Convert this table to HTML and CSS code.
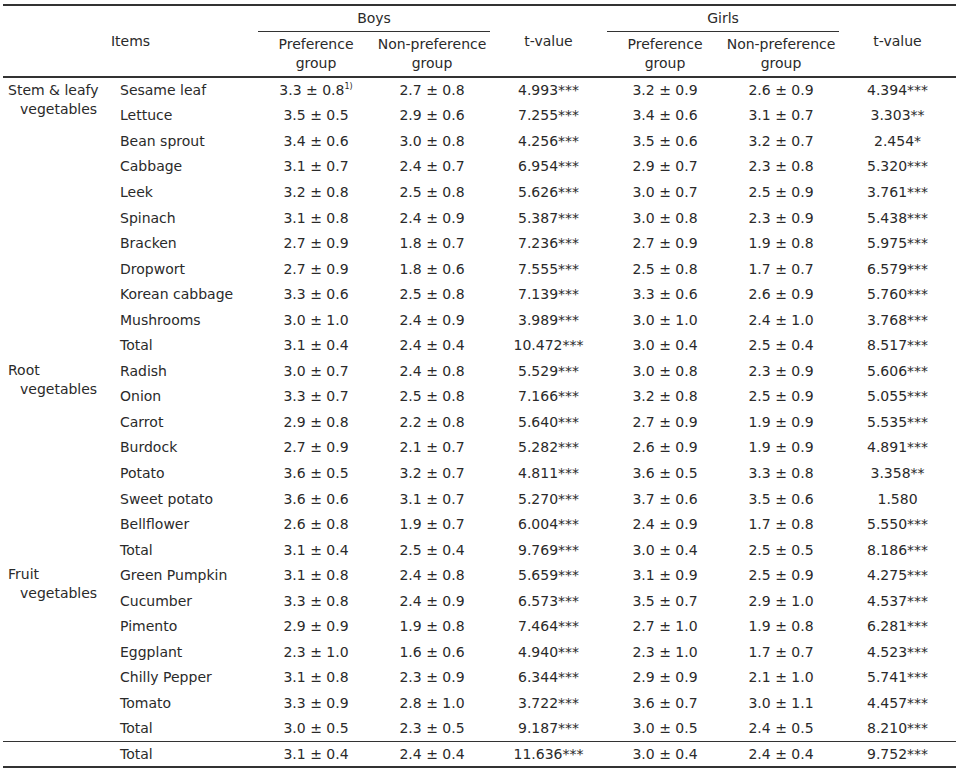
FILE: index.html
```html
<!DOCTYPE html>
<html>
<head>
<meta charset="utf-8">
<link rel="stylesheet" href="styles.css">
</head>
<body>
<table class="tbl">
  <colgroup>
    <col class="c-cat"><col class="c-item"><col class="c-n"><col class="c-n"><col class="c-t"><col class="c-n"><col class="c-n"><col class="c-t">
  </colgroup>
  <thead>
    <tr class="h1">
      <th colspan="2" rowspan="2" class="items-h">Items</th>
      <th colspan="2" class="grp">Boys</th>
      <th rowspan="2">t-value</th>
      <th colspan="2" class="grp">Girls</th>
      <th rowspan="2">t-value</th>
    </tr>
    <tr class="h2">
      <th>Preference<br>group</th>
      <th>Non-preference<br>group</th>
      <th>Preference<br>group</th>
      <th>Non-preference<br>group</th>
    </tr>
  </thead>
  <tbody>
    <tr><td rowspan="11" class="cat"><div class="catlbl">Stem &amp; leafy vegetables</div></td><td class="item">Sesame leaf</td><td>3.3 ± 0.8<sup>1)</sup></td><td>2.7 ± 0.8</td><td>4.993***</td><td>3.2 ± 0.9</td><td>2.6 ± 0.9</td><td>4.394***</td></tr>
    <tr><td class="item">Lettuce</td><td>3.5 ± 0.5</td><td>2.9 ± 0.6</td><td>7.255***</td><td>3.4 ± 0.6</td><td>3.1 ± 0.7</td><td>3.303**</td></tr>
    <tr><td class="item">Bean sprout</td><td>3.4 ± 0.6</td><td>3.0 ± 0.8</td><td>4.256***</td><td>3.5 ± 0.6</td><td>3.2 ± 0.7</td><td>2.454*</td></tr>
    <tr><td class="item">Cabbage</td><td>3.1 ± 0.7</td><td>2.4 ± 0.7</td><td>6.954***</td><td>2.9 ± 0.7</td><td>2.3 ± 0.8</td><td>5.320***</td></tr>
    <tr><td class="item">Leek</td><td>3.2 ± 0.8</td><td>2.5 ± 0.8</td><td>5.626***</td><td>3.0 ± 0.7</td><td>2.5 ± 0.9</td><td>3.761***</td></tr>
    <tr><td class="item">Spinach</td><td>3.1 ± 0.8</td><td>2.4 ± 0.9</td><td>5.387***</td><td>3.0 ± 0.8</td><td>2.3 ± 0.9</td><td>5.438***</td></tr>
    <tr><td class="item">Bracken</td><td>2.7 ± 0.9</td><td>1.8 ± 0.7</td><td>7.236***</td><td>2.7 ± 0.9</td><td>1.9 ± 0.8</td><td>5.975***</td></tr>
    <tr><td class="item">Dropwort</td><td>2.7 ± 0.9</td><td>1.8 ± 0.6</td><td>7.555***</td><td>2.5 ± 0.8</td><td>1.7 ± 0.7</td><td>6.579***</td></tr>
    <tr><td class="item">Korean cabbage</td><td>3.3 ± 0.6</td><td>2.5 ± 0.8</td><td>7.139***</td><td>3.3 ± 0.6</td><td>2.6 ± 0.9</td><td>5.760***</td></tr>
    <tr><td class="item">Mushrooms</td><td>3.0 ± 1.0</td><td>2.4 ± 0.9</td><td>3.989***</td><td>3.0 ± 1.0</td><td>2.4 ± 1.0</td><td>3.768***</td></tr>
    <tr><td class="item">Total</td><td>3.1 ± 0.4</td><td>2.4 ± 0.4</td><td>10.472***</td><td>3.0 ± 0.4</td><td>2.5 ± 0.4</td><td>8.517***</td></tr>

    <tr><td rowspan="8" class="cat"><div class="catlbl">Root vegetables</div></td><td class="item">Radish</td><td>3.0 ± 0.7</td><td>2.4 ± 0.8</td><td>5.529***</td><td>3.0 ± 0.8</td><td>2.3 ± 0.9</td><td>5.606***</td></tr>
    <tr><td class="item">Onion</td><td>3.3 ± 0.7</td><td>2.5 ± 0.8</td><td>7.166***</td><td>3.2 ± 0.8</td><td>2.5 ± 0.9</td><td>5.055***</td></tr>
    <tr><td class="item">Carrot</td><td>2.9 ± 0.8</td><td>2.2 ± 0.8</td><td>5.640***</td><td>2.7 ± 0.9</td><td>1.9 ± 0.9</td><td>5.535***</td></tr>
    <tr><td class="item">Burdock</td><td>2.7 ± 0.9</td><td>2.1 ± 0.7</td><td>5.282***</td><td>2.6 ± 0.9</td><td>1.9 ± 0.9</td><td>4.891***</td></tr>
    <tr><td class="item">Potato</td><td>3.6 ± 0.5</td><td>3.2 ± 0.7</td><td>4.811***</td><td>3.6 ± 0.5</td><td>3.3 ± 0.8</td><td>3.358**</td></tr>
    <tr><td class="item">Sweet potato</td><td>3.6 ± 0.6</td><td>3.1 ± 0.7</td><td>5.270***</td><td>3.7 ± 0.6</td><td>3.5 ± 0.6</td><td>1.580</td></tr>
    <tr><td class="item">Bellflower</td><td>2.6 ± 0.8</td><td>1.9 ± 0.7</td><td>6.004***</td><td>2.4 ± 0.9</td><td>1.7 ± 0.8</td><td>5.550***</td></tr>
    <tr><td class="item">Total</td><td>3.1 ± 0.4</td><td>2.5 ± 0.4</td><td>9.769***</td><td>3.0 ± 0.4</td><td>2.5 ± 0.5</td><td>8.186***</td></tr>

    <tr><td rowspan="7" class="cat"><div class="catlbl">Fruit vegetables</div></td><td class="item">Green Pumpkin</td><td>3.1 ± 0.8</td><td>2.4 ± 0.8</td><td>5.659***</td><td>3.1 ± 0.9</td><td>2.5 ± 0.9</td><td>4.275***</td></tr>
    <tr><td class="item">Cucumber</td><td>3.3 ± 0.8</td><td>2.4 ± 0.9</td><td>6.573***</td><td>3.5 ± 0.7</td><td>2.9 ± 1.0</td><td>4.537***</td></tr>
    <tr><td class="item">Pimento</td><td>2.9 ± 0.9</td><td>1.9 ± 0.8</td><td>7.464***</td><td>2.7 ± 1.0</td><td>1.9 ± 0.8</td><td>6.281***</td></tr>
    <tr><td class="item">Eggplant</td><td>2.3 ± 1.0</td><td>1.6 ± 0.6</td><td>4.940***</td><td>2.3 ± 1.0</td><td>1.7 ± 0.7</td><td>4.523***</td></tr>
    <tr><td class="item">Chilly Pepper</td><td>3.1 ± 0.8</td><td>2.3 ± 0.9</td><td>6.344***</td><td>2.9 ± 0.9</td><td>2.1 ± 1.0</td><td>5.741***</td></tr>
    <tr><td class="item">Tomato</td><td>3.3 ± 0.9</td><td>2.8 ± 1.0</td><td>3.722***</td><td>3.6 ± 0.7</td><td>3.0 ± 1.1</td><td>4.457***</td></tr>
    <tr><td class="item">Total</td><td>3.0 ± 0.5</td><td>2.3 ± 0.5</td><td>9.187***</td><td>3.0 ± 0.5</td><td>2.4 ± 0.5</td><td>8.210***</td></tr>
  </tbody>
  <tfoot>
    <tr class="grand"><td></td><td class="item">Total</td><td>3.1 ± 0.4</td><td>2.4 ± 0.4</td><td>11.636***</td><td>3.0 ± 0.4</td><td>2.4 ± 0.4</td><td>9.752***</td></tr>
  </tfoot>
</table>
</body>
</html>
```
FILE: styles.css
```css
html, body {
  margin: 0;
  padding: 0;
  background: #ffffff;
}

body {
  font-family: "DejaVu Sans", "Liberation Sans", sans-serif;
  font-size: 14px;
  color: #2a2a2a;
}

.tbl {
  border-collapse: collapse;
  table-layout: fixed;
  width: 952px;
  margin: 4px 0 0 3px;
}

.c-cat { width: 112px; }
.c-item { width: 143px; }
.c-n { width: 116px; }
.c-t { width: 117px; }

th {
  font-weight: normal;
  text-align: center;
  vertical-align: middle;
  padding: 0;
  line-height: 19px;
}

thead .h1 th {
  border-top: 2px solid #333333;
}

.h1 {
  height: 26px;
}

.h1 th.grp {
  border-bottom: 1px solid #333333;
}

.h2 {
  height: 46px;
}

.h2 th {
  padding-top: 1px;
}

thead tr.h2 th,
thead th[rowspan] {
  border-bottom: 2px solid #333333;
}

td {
  padding: 0;
  text-align: center;
  vertical-align: middle;
  white-space: nowrap;
}

tbody tr {
  height: 25.56px;
}

td.item {
  text-align: left;
  padding-left: 5px;
}

td.cat {
  vertical-align: top;
  text-align: left;
  white-space: normal;
}

.catlbl {
  padding: 3px 14px 0 17px;
  text-indent: -12px;
  line-height: 19px;
}

sup {
  font-size: 8px;
  line-height: 0;
  vertical-align: 6px;
}

.grand {
  height: 26px;
}

.grand td {
  border-top: 1px solid #333333;
  border-bottom: 2px solid #333333;
}
```
